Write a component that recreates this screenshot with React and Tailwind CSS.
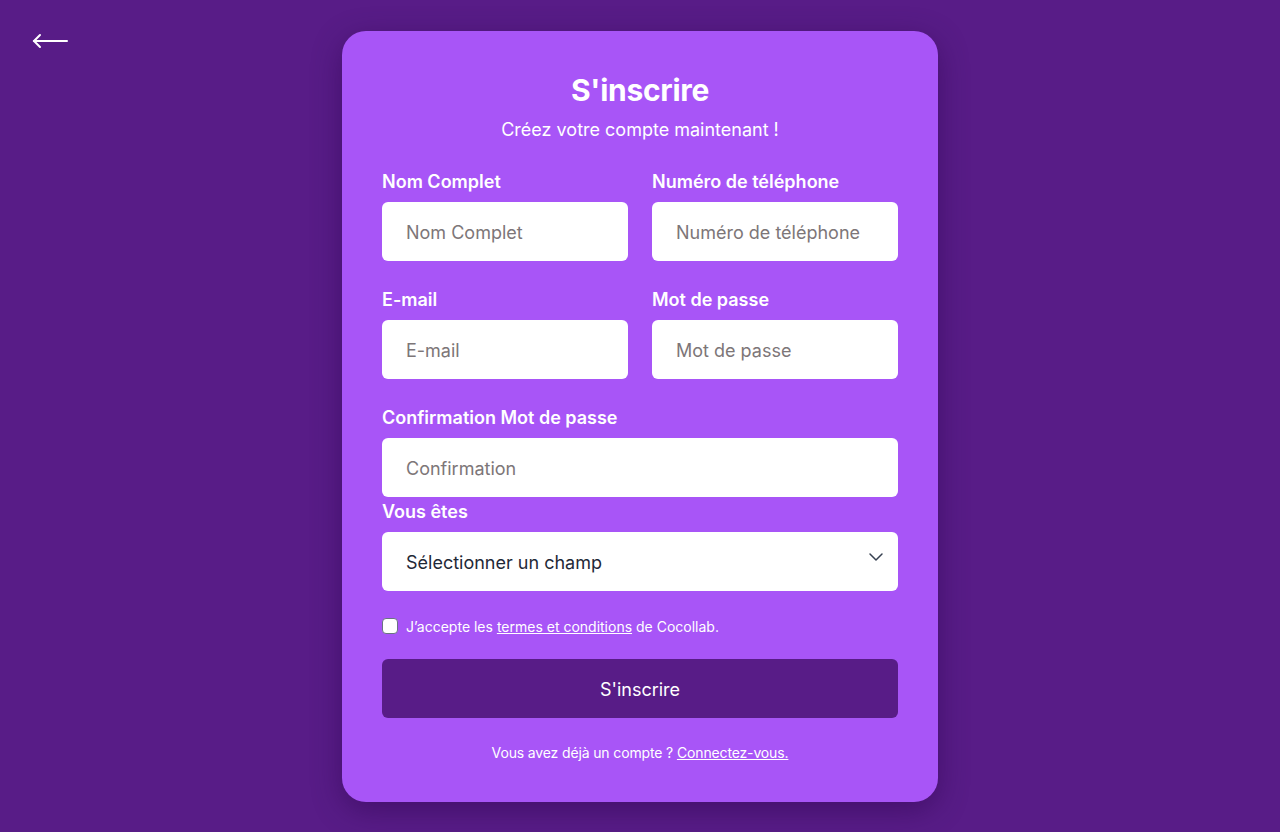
import React, { useState } from 'react';

const Field = ({ label, placeholder, type = 'text' }) => (
  <div className="flex flex-col">
    <label className="pt-px text-[18px] leading-7 font-semibold text-white">{label}</label>
    <input
      type={type}
      placeholder={placeholder}
      className="mt-1.5 h-[59px] w-full rounded-md bg-white px-6 pt-0.5 text-[18px] text-gray-800 placeholder:text-[#7d7678] outline-none"
    />
  </div>
);

const App = () => {
  const [accepted, setAccepted] = useState(false);

  return (
    <div
      className="relative min-h-[832px] w-full bg-[#581c87] flex justify-center pt-[31px]"
      style={{ fontFamily: 'Inter, "Noto Sans", sans-serif' }}
    >
      <button className="absolute left-[32px] top-[32px] text-white" aria-label="Retour">
        <svg width="38" height="18" viewBox="0 0 38 18" fill="none" stroke="white" strokeWidth="2" strokeLinecap="round">
          <path d="M2 9h33" />
          <path d="M8 3L2 9l6 6" />
        </svg>
      </button>

      <div className="w-[596px] h-[771px] rounded-3xl bg-[#a855f7] px-10 pt-10 shadow-[0_8px_30px_rgba(40,0,70,0.45)]">
        <h1 className="pt-px text-center text-[30px] leading-9 font-bold text-white tracking-[-0.01em]">S'inscrire</h1>
        <p className="mt-2 text-center text-[18px] leading-7 text-white">Créez votre compte maintenant !</p>

        <form className="mt-[23px] flex flex-col" onSubmit={(e) => e.preventDefault()}>
          <div className="grid grid-cols-2 gap-x-6 gap-y-6">
            <Field label="Nom Complet" placeholder="Nom Complet" />
            <Field label="Numéro de téléphone" placeholder="Numéro de téléphone" />
            <Field label="E-mail" placeholder="E-mail" type="email" />
            <Field label="Mot de passe" placeholder="Mot de passe" type="password" />
          </div>

          <div className="mt-6">
            <Field label="Confirmation Mot de passe" placeholder="Confirmation" type="password" />
          </div>

          <div className="flex flex-col">
            <label className="pt-px text-[18px] leading-7 font-semibold text-white">Vous êtes</label>
            <div className="relative mt-1.5">
              <select className="h-[59px] w-full appearance-none rounded-md bg-white px-6 pt-0.5 text-[18px] text-[#1f2937] outline-none">
                <option>Sélectionner un champ</option>
                <option>Étudiant</option>
                <option>Entreprise</option>
              </select>
              <svg
                className="pointer-events-none absolute right-[12px] top-[15px]"
                width="20"
                height="20"
                viewBox="0 0 20 20"
                fill="none"
                stroke="#374151"
                strokeWidth="1.5"
                strokeLinecap="round"
                strokeLinejoin="round"
              >
                <path d="M4 7l6 6 6-6" />
              </svg>
            </div>
          </div>

          <div className="mt-6 flex items-center h-5 pt-0.5 text-[14px] text-white">
            <input
              type="checkbox"
              checked={accepted}
              onChange={(e) => setAccepted(e.target.checked)}
              className="h-4 w-4 appearance-none rounded-sm border border-gray-500 bg-white mr-2"
            />
            <span>
              J’accepte les <a href="#" className="underline">termes et conditions</a> de Cocollab.
            </span>
          </div>

          <button
            type="submit"
            className="mt-6 h-[59px] w-full rounded-md bg-[#581c87] pt-0.5 text-[18px] text-white"
          >
            S'inscrire
          </button>

          <p className="mt-6 pt-px text-center text-[14px] leading-5 text-white tracking-[-0.01em]">
            Vous avez déjà un compte ? <a href="#" className="underline">Connectez-vous.</a>
          </p>
        </form>
      </div>
    </div>
  );
};

export default App;
